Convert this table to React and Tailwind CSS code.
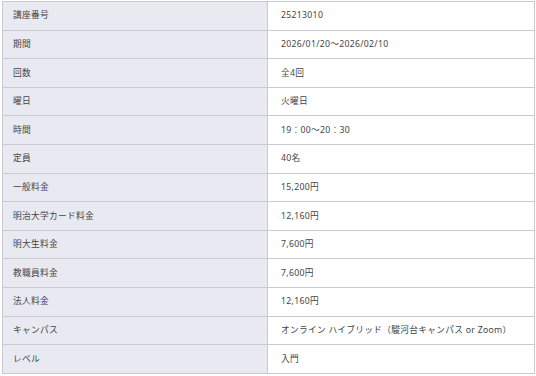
import React from "react";

const rows = [
  ["講座番号", "25213010"],
  ["期間", "2026/01/20〜2026/02/10"],
  ["回数", "全4回"],
  ["曜日", "火曜日"],
  ["時間", "19：00〜20：30"],
  ["定員", "40名"],
  ["一般料金", "15,200円"],
  ["明治大学カード料金", "12,160円"],
  ["明大生料金", "7,600円"],
  ["教職員料金", "7,600円"],
  ["法人料金", "12,160円"],
  ["キャンパス", "オンライン ハイブリッド（駿河台キャンパス or Zoom）"],
  ["レベル", "入門"],
];

export default function App() {
  return (
    <div
      className="w-[536px] h-[376px] bg-white pt-[1px] pl-[2px] overflow-hidden"
      style={{ fontFamily: '"Noto Sans", "Noto Sans CJK JP", sans-serif' }}
    >
      <div className="w-[533px] h-[373px] flex flex-col border border-[#c9c9d1]">
        {rows.map(([k, v], i) => (
          <div
            key={i}
            className={`flex flex-1 ${i < rows.length - 1 ? "border-b border-[#c9c9d1]" : ""}`}
          >
            <div className="w-[265px] shrink-0 bg-[#e9e9f2] border-r border-[#c9c9d1] flex items-center pl-[10px] text-[8.7px] text-[#444] tracking-[0.3px]">
              {k}
            </div>
            <div className="flex-1 bg-white flex items-center pl-[13px] text-[8.7px] text-[#444] tracking-[0.3px]">
              {v}
            </div>
          </div>
        ))}
      </div>
    </div>
  );
}
